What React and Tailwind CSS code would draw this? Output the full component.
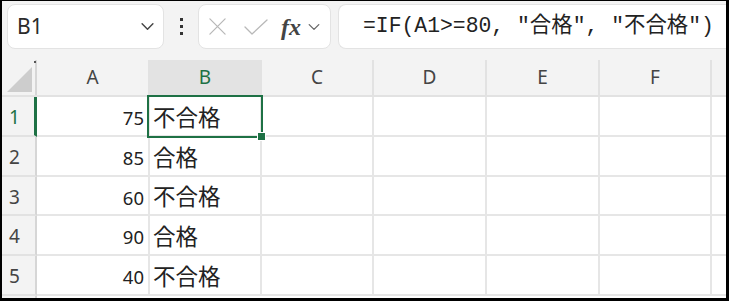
import React from "react";

const cols = [
  { k: "A", w: "w-[113px]" },
  { k: "B", w: "w-[112px]" },
  { k: "C", w: "w-[112px]" },
  { k: "D", w: "w-[113px]" },
  { k: "E", w: "w-[113px]" },
  { k: "F", w: "w-[112px]" },
];

const rows = [
  { n: 1, a: "75", b: "不合格", h: "h-[40px]" },
  { n: 2, a: "85", b: "合格", h: "h-[40px]" },
  { n: 3, a: "60", b: "不合格", h: "h-[39px]" },
  { n: 4, a: "90", b: "合格", h: "h-[40px]" },
  { n: 5, a: "40", b: "不合格", h: "h-[40px]" },
];

const cellFont = { fontFamily: "'Noto Sans', 'Noto Sans CJK JP', sans-serif" };

function Chevron({ className }) {
  return (
    <svg viewBox="0 0 16 10" className={className} fill="none" stroke="currentColor" strokeWidth="1.6" strokeLinecap="round" strokeLinejoin="round">
      <path d="M2 2 L8 8 L14 2" />
    </svg>
  );
}

export default function App() {
  return (
    <div className="w-[729px] h-[301px] overflow-hidden border-black border-l-2 border-t border-r-[3px] border-b-[3px] bg-[#f3f3f3] flex flex-col">
      {/* toolbar */}
      <div className="h-[59px] shrink-0 flex items-start pt-[3px] pl-[5px]">
        <div className="w-[157px] h-[45px] bg-white rounded-lg border border-[#e3e3e3] flex items-center pl-[9px] pr-[8px]">
          <span className="text-[21px] text-[#2b2b2b] flex-1" style={{ fontFamily: "'Noto Sans', sans-serif" }}>B1</span>
          <Chevron className="w-[15px] h-[9px] text-[#444]" />
        </div>
        <div className="w-[34px] h-[45px] flex flex-col items-center justify-center gap-[4px]">
          <div className="w-[3px] h-[3px] bg-[#333]" />
          <div className="w-[3px] h-[3px] bg-[#333]" />
          <div className="w-[3px] h-[3px] bg-[#333]" />
        </div>
        <div className="w-[133px] h-[45px] bg-white rounded-lg border border-[#e3e3e3] flex items-center pl-[9px]">
          <svg viewBox="0 0 20 20" className="w-[19px] h-[19px] text-[#b8b8b8]" fill="none" stroke="currentColor" strokeWidth="1.3" strokeLinecap="round">
            <path d="M2 2 L18 18 M18 2 L2 18" />
          </svg>
          <svg viewBox="0 0 24 16" className="w-[24px] h-[16px] ml-[17px] text-[#b8b8b8]" fill="none" stroke="currentColor" strokeWidth="1.3" strokeLinecap="round" strokeLinejoin="round">
            <path d="M1 8 L8 15 L23 1" />
          </svg>
          <span className="ml-[13px] text-[24px] italic font-bold text-[#444] leading-none" style={{ fontFamily: "'Liberation Serif', serif" }}>fx</span>
          <Chevron className="ml-[6px] w-[14px] h-[8px] text-[#666]" />
        </div>
        <div className="flex-1 ml-[7px] h-[45px] bg-white rounded-l-lg border border-r-0 border-[#e3e3e3] flex items-center pl-[24px]">
          <span className="text-[21.4px] text-[#222] whitespace-nowrap" style={{ fontFamily: "'Liberation Mono', 'Noto Sans CJK JP', monospace" }}>
            =IF(A1&gt;=80, "合格", "不合格")
          </span>
        </div>
      </div>

      {/* column header row */}
      <div className="h-[37px] shrink-0 flex border-b-2 border-[#e2e2e2]">
        <div className="relative w-[35px] shrink-0 bg-[#f3f3f3] border-r-2 border-[#d6d6d6]">
          <svg viewBox="0 0 25 25" className="absolute right-[3px] bottom-[3px] w-[25px] h-[25px]">
            <path d="M25 0 L25 25 L0 25 Z" fill="#cdcdcd" />
          </svg>
          <div className="absolute right-[-1px] top-[1px] w-[2px] h-[2px] bg-[#555]" />
        </div>
        {cols.map((c) => (
          <div
            key={c.k}
            className={`${c.w} shrink-0 flex items-center justify-center text-[19px] border-r-2 ${
              c.k === "B"
                ? "bg-[#e3e3e3] text-[#1e7145] border-[#e2e2e2] border-b-2 border-b-[#1e7145] -mb-[2px]"
                : "bg-[#f3f3f3] text-[#444] border-[#e2e2e2]"
            }`}
            style={{ fontFamily: "'Noto Sans', sans-serif" }}
          >
            {c.k}
          </div>
        ))}
        <div className="flex-1 bg-[#f3f3f3]" />
      </div>

      {/* rows */}
      {rows.map((r) => (
        <div key={r.n} className={`${r.h} shrink-0 flex`}>
          <div
            className={`w-[35px] shrink-0 flex items-center pl-[7px] pt-[3px] text-[19px] bg-[#f3f3f3] border-b-2 border-b-[#e2e2e2] ${
              r.n === 1 ? "text-[#1e7145] border-r-[3px] border-r-[#1e7145]" : "text-[#444] border-r-2 border-r-[#d6d6d6]"
            }`}
            style={{ fontFamily: "'Noto Sans', sans-serif" }}
          >
            {r.n}
          </div>
          <div className="w-[113px] shrink-0 bg-white border-r-2 border-b-2 border-[#e6e6e6] flex items-center justify-end pr-[4px] pt-[4px] text-[18.5px] text-[#222]" style={cellFont}>
            {r.a}
          </div>
          <div className="relative w-[112px] shrink-0 bg-white border-r-2 border-b-2 border-[#e6e6e6] flex items-center pl-[3px] pt-[3px] text-[22.5px] text-[#222]" style={cellFont}>
            {r.b}
            {r.n === 1 && (
              <>
                <div className="absolute z-10 left-[-3px] top-[-2px] right-[-3px] bottom-[-3px] border-2 border-[#1e7145]" />
                <div className="absolute z-20 right-[-6px] bottom-[-6px] w-[9px] h-[9px] bg-[#1e7145] border border-white" />
              </>
            )}
          </div>
          {["C", "D", "E", "F"].map((k, i) => (
            <div key={k} className={`${i === 0 || i === 3 ? "w-[112px]" : "w-[113px]"} shrink-0 bg-white border-r-2 border-b-2 border-[#e6e6e6]`} />
          ))}
          <div className="flex-1 bg-white border-b-2 border-[#e6e6e6]" />
        </div>
      ))}
      <div className="flex-1 flex">
        <div className="w-[35px] shrink-0 bg-[#f3f3f3] border-r-2 border-[#d6d6d6]" />
        <div className="flex-1 bg-white" />
      </div>
    </div>
  );
}
